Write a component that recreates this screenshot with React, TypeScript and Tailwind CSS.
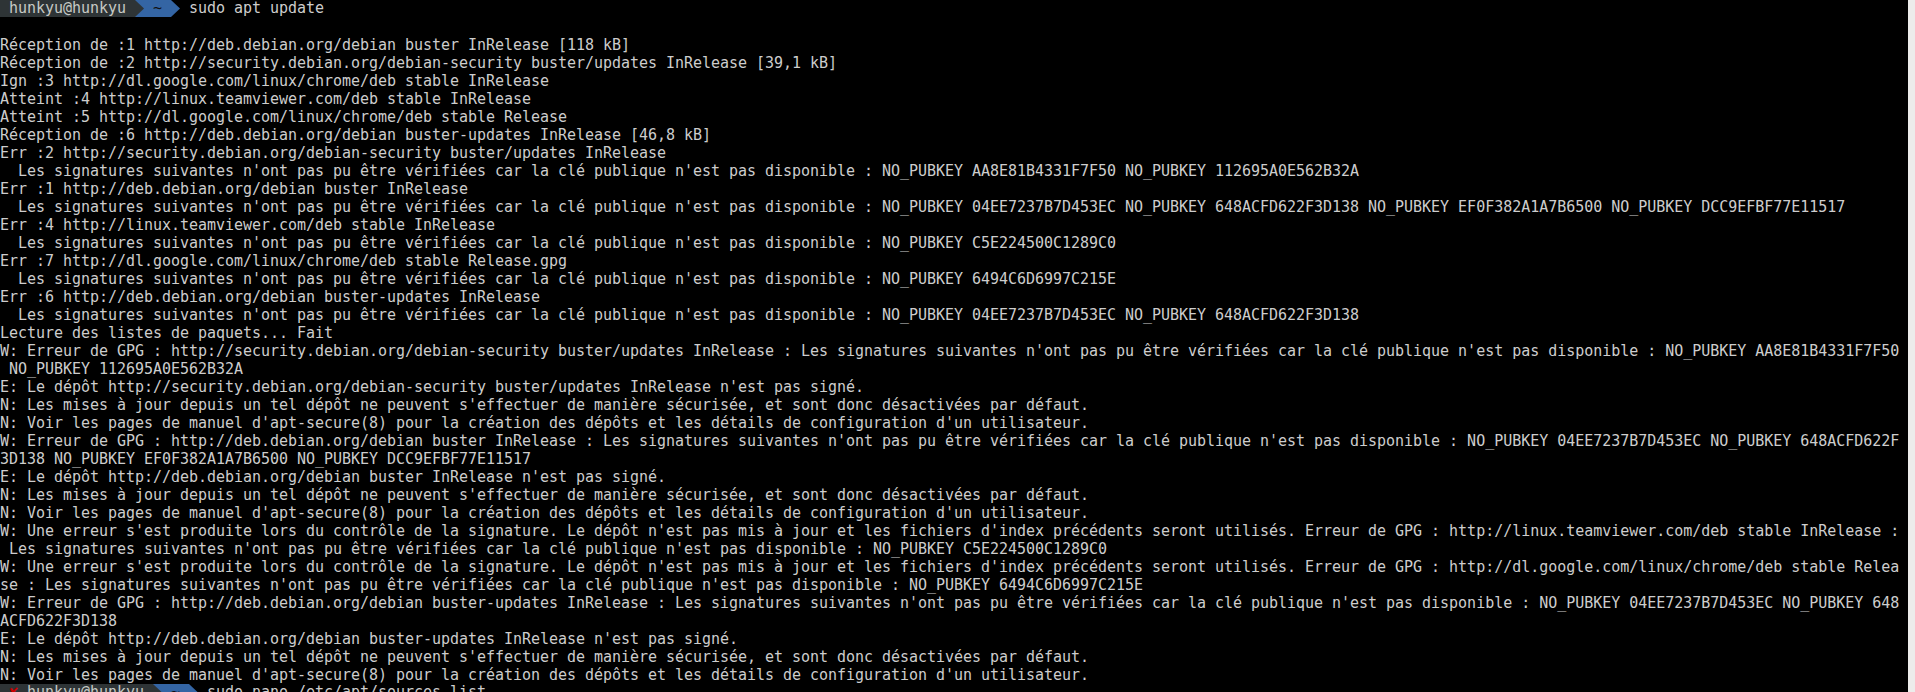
import React from "react";

const SIG = "  Les signatures suivantes n'ont pas pu être vérifiées car la clé publique n'est pas disponible : ";
const N1 = "N: Les mises à jour depuis un tel dépôt ne peuvent s'effectuer de manière sécurisée, et sont donc désactivées par défaut.";
const N2 = "N: Voir les pages de manuel d'apt-secure(8) pour la création des dépôts et les détails de configuration d'un utilisateur.";

const lines: string[] = [
  "",
  "Réception de :1 http://deb.debian.org/debian buster InRelease [118 kB]",
  "Réception de :2 http://security.debian.org/debian-security buster/updates InRelease [39,1 kB]",
  "Ign :3 http://dl.google.com/linux/chrome/deb stable InRelease",
  "Atteint :4 http://linux.teamviewer.com/deb stable InRelease",
  "Atteint :5 http://dl.google.com/linux/chrome/deb stable Release",
  "Réception de :6 http://deb.debian.org/debian buster-updates InRelease [46,8 kB]",
  "Err :2 http://security.debian.org/debian-security buster/updates InRelease",
  SIG + "NO_PUBKEY AA8E81B4331F7F50 NO_PUBKEY 112695A0E562B32A",
  "Err :1 http://deb.debian.org/debian buster InRelease",
  SIG + "NO_PUBKEY 04EE7237B7D453EC NO_PUBKEY 648ACFD622F3D138 NO_PUBKEY EF0F382A1A7B6500 NO_PUBKEY DCC9EFBF77E11517",
  "Err :4 http://linux.teamviewer.com/deb stable InRelease",
  SIG + "NO_PUBKEY C5E224500C1289C0",
  "Err :7 http://dl.google.com/linux/chrome/deb stable Release.gpg",
  SIG + "NO_PUBKEY 6494C6D6997C215E",
  "Err :6 http://deb.debian.org/debian buster-updates InRelease",
  SIG + "NO_PUBKEY 04EE7237B7D453EC NO_PUBKEY 648ACFD622F3D138",
  "Lecture des listes de paquets... Fait",
  "W: Erreur de GPG : http://security.debian.org/debian-security buster/updates InRelease : Les signatures suivantes n'ont pas pu être vérifiées car la clé publique n'est pas disponible : NO_PUBKEY AA8E81B4331F7F50",
  " NO_PUBKEY 112695A0E562B32A",
  "E: Le dépôt http://security.debian.org/debian-security buster/updates InRelease n'est pas signé.",
  N1,
  N2,
  "W: Erreur de GPG : http://deb.debian.org/debian buster InRelease : Les signatures suivantes n'ont pas pu être vérifiées car la clé publique n'est pas disponible : NO_PUBKEY 04EE7237B7D453EC NO_PUBKEY 648ACFD622F",
  "3D138 NO_PUBKEY EF0F382A1A7B6500 NO_PUBKEY DCC9EFBF77E11517",
  "E: Le dépôt http://deb.debian.org/debian buster InRelease n'est pas signé.",
  N1,
  N2,
  "W: Une erreur s'est produite lors du contrôle de la signature. Le dépôt n'est pas mis à jour et les fichiers d'index précédents seront utilisés. Erreur de GPG : http://linux.teamviewer.com/deb stable InRelease :",
  " Les signatures suivantes n'ont pas pu être vérifiées car la clé publique n'est pas disponible : NO_PUBKEY C5E224500C1289C0",
  "W: Une erreur s'est produite lors du contrôle de la signature. Le dépôt n'est pas mis à jour et les fichiers d'index précédents seront utilisés. Erreur de GPG : http://dl.google.com/linux/chrome/deb stable Relea",
  "se : Les signatures suivantes n'ont pas pu être vérifiées car la clé publique n'est pas disponible : NO_PUBKEY 6494C6D6997C215E",
  "W: Erreur de GPG : http://deb.debian.org/debian buster-updates InRelease : Les signatures suivantes n'ont pas pu être vérifiées car la clé publique n'est pas disponible : NO_PUBKEY 04EE7237B7D453EC NO_PUBKEY 648",
  "ACFD622F3D138",
  "E: Le dépôt http://deb.debian.org/debian buster-updates InRelease n'est pas signé.",
  N1,
  N2,
];

function Arrow({ fg, bg }: { fg: string; bg: string }) {
  return (
    <svg width="9" height="17" viewBox="0 0 9 17" className="block shrink-0">
      <rect x="0" y="0" width="9" height="17" fill={bg} />
      <polygon points="0,0 9,8.5 0,17" fill={fg} />
    </svg>
  );
}

function Prompt({ fail, cmd }: { fail?: boolean; cmd: string }) {
  return (
    <div className="flex h-[18px] items-start whitespace-pre">
      <div className="flex h-[17px] items-center bg-[#2e3436] text-[#c6c9c4] leading-[17px]">
        {fail ? (
          <>
            <span> </span>
            <span className="text-[#cc0000]">✘</span>
            <span> hunkyu@hunkyu </span>
          </>
        ) : (
          <span> hunkyu@hunkyu </span>
        )}
      </div>
      <Arrow fg="#2e3436" bg="#3465a4" />
      <div className="h-[17px] bg-[#3465a4] leading-[17px] text-[#111111]"> ~ </div>
      <Arrow fg="#3465a4" bg="#000000" />
      <span className="leading-[17px]"> {cmd}</span>
    </div>
  );
}

export default function App() {
  return (
    <div
      className="flex h-[692px] w-[1915px] overflow-hidden bg-[#000000]"
      style={{ fontFamily: '"DejaVu Sans Mono", "Liberation Mono", monospace' }}
    >
      <div className="w-[1908px] shrink-0 overflow-hidden bg-black text-[15px] leading-[18px] tracking-[-0.03px] text-[#cdcdcd]">
        <Prompt cmd="sudo apt update" />
        {lines.map((l, i) => (
          <div key={i} className="h-[18px] whitespace-pre">
            {l}
          </div>
        ))}
        <Prompt fail cmd="sudo nano /etc/apt/sources.list" />
      </div>
      <div className="flex-1 bg-[#edeceb]" />
    </div>
  );
}
